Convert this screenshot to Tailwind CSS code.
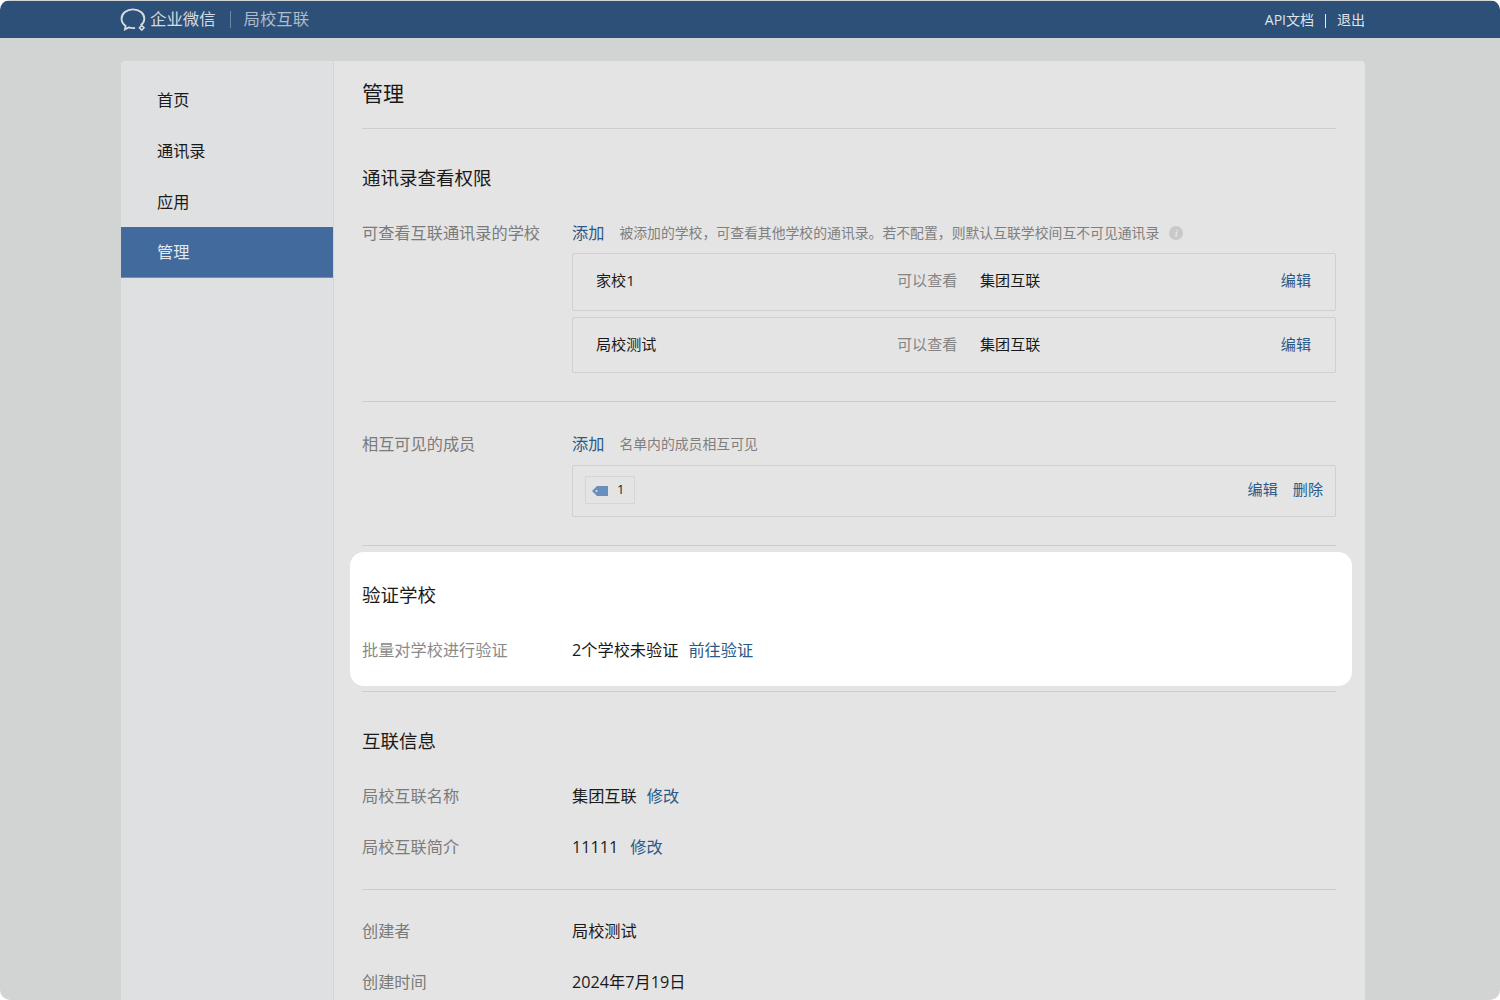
<!DOCTYPE html>
<html lang="zh-CN">
<head>
  <meta charset="UTF-8" />
  <title>局校互联</title>
  <script src="https://cdn.jsdelivr.net/npm/@tailwindcss/browser@4"></script>
</head>
<body class="bg-white font-['Open_Sans','Noto_Sans_CJK_SC',sans-serif]">
  <div class="w-[1500px] h-[1000px] overflow-hidden bg-[#d2d4d4] rounded-[10px] flex flex-col">
    <!-- top bar -->
    <header class="h-[37px] mt-px shrink-0 bg-[#2d5078] pl-[120px] pr-[135px] flex items-center">
      <svg class="w-[29px] h-[25px] mt-px" viewBox="0 0 28 24" fill="none" stroke="#d5dbe2" stroke-width="1.8">
        <path d="M20 16.500c2.200-1.600 3.500-3.700 3.500-6.200C23.500 5.300 18.500 1.200 12.500 1.200S1.500 5.300 1.500 10.300c0 2.800 1.500 5.200 3.900 6.900l-.6 3.300 3.700-1.800c1.300.4 2.600.6 4 .6.700 0 1.400 0 2-.2" />
        <path d="M21 16.800l2.200 2.200-2.200 2.200-2.200-2.200z" stroke-width="1.500" />
      </svg>
      <span class="ml-px mb-px text-[16.400px] text-[#d5dbe2]">企业微信</span>
      <span class="ml-[14px] w-px h-[17px] bg-[#6d89a6]"></span>
      <span class="ml-[13px] mb-px text-[16.400px] text-[#aebccb]">局校互联</span>
      <div class="ml-auto flex items-center text-[14px] text-[#dfe4ea] mt-[3px]">
        <span class="mb-[4px]">API文档</span>
        <span class="mx-[11px] w-px h-[14px] bg-[#e6e9ee]"></span>
        <span class="mb-[4px]">退出</span>
      </div>
    </header>

    <div class="mt-[23px] ml-[121px] w-[1244px] flex flex-1 rounded-t-[4px] overflow-hidden">
      <!-- side nav -->
      <nav class="w-[213px] shrink-0 bg-[#dfe0e2] pt-[14px] text-[16.200px] text-[#1a1a1a] border-r border-dotted border-[#c8c9cb]">
        <div class="h-[51px] pl-[36px] flex items-center">首页</div>
        <div class="h-[51px] pl-[36px] flex items-center">通讯录</div>
        <div class="h-[50px] pl-[36px] flex items-center">应用</div>
        <div class="h-[51px] pl-[36px] flex items-center bg-[#426a9c] text-[#e3e8ee] border-b border-[#7290b6]">管理</div>
      </nav>

      <!-- main -->
      <main class="flex-1 bg-[#e4e4e4] pl-[28px] pr-[29px] text-[16.200px]">
        <h1 class="h-[68px] pt-[16px] text-[21px] leading-[32px] text-[#1a1a1a] border-b border-[#cdcdcd]">管理</h1>

        <section class="pt-[35px] pb-[28px] border-b border-[#cdcdcd]">
          <h2 class="text-[18.500px] leading-[28px] text-[#1a1a1a]">通讯录查看权限</h2>
          <div class="mt-[29px] flex">
            <div class="w-[210px] shrink-0 leading-[24px] text-[#7b7b7b]">可查看互联通讯录的学校</div>
            <div class="flex-1">
              <div class="flex items-center h-[24px]">
                <span class="text-[#2a5a88]">添加</span>
                <span class="ml-[15px] text-[13.850px] text-[#7f7f7f]">被添加的学校，可查看其他学校的通讯录。若不配置，则默认互联学校间互不可见通讯录</span>
                <span class="ml-[10px] w-[14px] h-[14px] rounded-full bg-[#c9c9c9] text-[#e4e4e4] text-[11px] italic font-bold flex items-center justify-center font-['Liberation_Serif',serif]">i</span>
              </div>
              <div class="mt-[8px] h-[58px] flex items-center pl-[23px] pr-[24px] pb-[3px] text-[15.100px] border border-[#d0d0d0] rounded-[2px]">
                <span class="w-[301px] text-[#1a1a1a]">家校1</span>
                <span class="w-[83px] text-[#858585]">可以查看</span>
                <span class="text-[#1a1a1a]">集团互联</span>
                <span class="ml-auto text-[#2a5a88]">编辑</span>
              </div>
              <div class="mt-[6px] h-[56px] flex items-center pl-[23px] pr-[24px] pb-[2px] text-[15.100px] border border-[#d0d0d0] rounded-[2px]">
                <span class="w-[301px] text-[#1a1a1a]">局校测试</span>
                <span class="w-[83px] text-[#858585]">可以查看</span>
                <span class="text-[#1a1a1a]">集团互联</span>
                <span class="ml-auto text-[#2a5a88]">编辑</span>
              </div>
            </div>
          </div>
        </section>

        <section class="pt-[30px] pb-[28px] border-b border-[#cdcdcd] flex">
          <div class="w-[210px] shrink-0 leading-[24px] text-[#7b7b7b]">相互可见的成员</div>
          <div class="flex-1">
            <div class="flex items-center h-[24px]">
              <span class="text-[#2a5a88]">添加</span>
              <span class="ml-[15px] text-[13.850px] text-[#7f7f7f]">名单内的成员相互可见</span>
            </div>
            <div class="mt-[9px] h-[52px] flex items-center pl-[12px] pr-[12px] text-[15.100px] border border-[#d0d0d0] rounded-[2px]">
              <span class="w-[50px] h-[28px] mb-[2px] border border-[#d6d6d6] flex items-center pl-[6px]">
                <svg class="w-[16px] h-[10px] mt-[2px]" viewBox="0 0 16 10"><path d="M0 5 5 0h11v10H5z" fill="#6a8fbc" /><circle cx="4.500" cy="5" r="1" fill="#e4e4e4" /></svg>
                <span class="ml-[9px] text-[13px] text-[#1a1a1a]">1</span>
              </span>
              <span class="ml-auto mb-[3px] text-[#2a5a88]">编辑</span>
              <span class="ml-[15px] mb-[3px] text-[#2a5a88]">删除</span>
            </div>
          </div>
        </section>

        <!-- highlighted block -->
        <section class="mt-[6px] -ml-[12px] -mr-[16px] h-[134px] pl-[12px] pr-[16px] pt-[29px] bg-white rounded-[14px]">
          <h2 class="text-[18.500px] leading-[28px] text-[#1a1a1a]">验证学校</h2>
          <div class="mt-[29px] flex leading-[24px]">
            <div class="w-[210px] shrink-0 text-[#8a8a8a]">批量对学校进行验证</div>
            <span class="text-[#1a1a1a]">2个学校未验证</span>
            <span class="ml-[10px] text-[#2a5a88]">前往验证</span>
          </div>
        </section>

        <section class="mt-[5px] pt-[35px] pb-[30px] border-y border-[#cdcdcd]">
          <h2 class="text-[18.500px] leading-[28px] text-[#1a1a1a]">互联信息</h2>
          <div class="mt-[29px] flex leading-[24px]">
            <div class="w-[210px] shrink-0 text-[#7b7b7b]">局校互联名称</div>
            <span class="text-[#1a1a1a]">集团互联</span>
            <span class="ml-[10px] text-[#2a5a88]">修改</span>
          </div>
          <div class="mt-[27px] flex leading-[24px]">
            <div class="w-[210px] shrink-0 text-[#7b7b7b]">局校互联简介</div>
            <span class="text-[#1a1a1a]">11111</span>
            <span class="ml-[12px] text-[#2a5a88]">修改</span>
          </div>
        </section>

        <section class="pt-[29px]">
          <div class="flex leading-[24px]">
            <div class="w-[210px] shrink-0 text-[#7b7b7b]">创建者</div>
            <span class="text-[#1a1a1a]">局校测试</span>
          </div>
          <div class="mt-[27px] flex leading-[24px]">
            <div class="w-[210px] shrink-0 text-[#7b7b7b]">创建时间</div>
            <span class="text-[#1a1a1a]">2024年7月19日</span>
          </div>
        </section>
      </main>
    </div>
  </div>
</body>
</html>
